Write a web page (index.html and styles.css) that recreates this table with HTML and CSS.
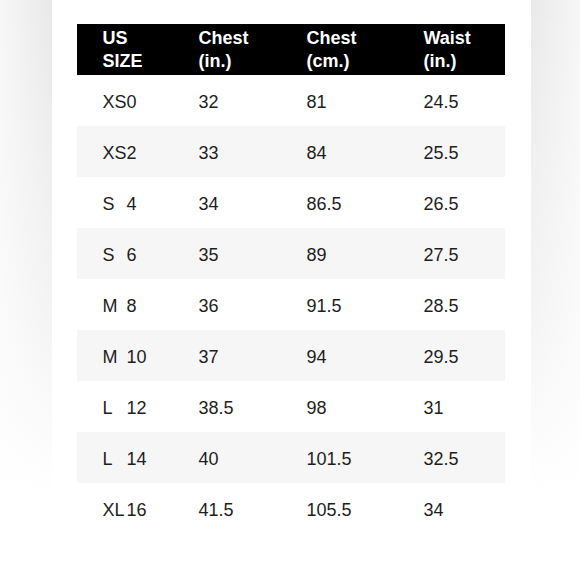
FILE: index.html
```html
<!DOCTYPE html>
<html>
<head>
<meta charset="utf-8">
<link rel="stylesheet" href="styles.css">
</head>
<body>
<div class="panel">
  <div class="table">
    <div class="row head">
      <div class="cell">US<br>SIZE</div>
      <div class="cell">Chest<br>(in.)</div>
      <div class="cell">Chest<br>(cm.)</div>
      <div class="cell">Waist<br>(in.)</div>
    </div>
    <div class="row"><div class="cell"><span class="ltr">XS</span>0</div><div class="cell">32</div><div class="cell">81</div><div class="cell">24.5</div></div>
    <div class="row alt"><div class="cell"><span class="ltr">XS</span>2</div><div class="cell">33</div><div class="cell">84</div><div class="cell">25.5</div></div>
    <div class="row"><div class="cell"><span class="ltr">S</span>4</div><div class="cell">34</div><div class="cell">86.5</div><div class="cell">26.5</div></div>
    <div class="row alt"><div class="cell"><span class="ltr">S</span>6</div><div class="cell">35</div><div class="cell">89</div><div class="cell">27.5</div></div>
    <div class="row"><div class="cell"><span class="ltr">M</span>8</div><div class="cell">36</div><div class="cell">91.5</div><div class="cell">28.5</div></div>
    <div class="row alt"><div class="cell"><span class="ltr">M</span>10</div><div class="cell">37</div><div class="cell">94</div><div class="cell">29.5</div></div>
    <div class="row"><div class="cell"><span class="ltr">L</span>12</div><div class="cell">38.5</div><div class="cell">98</div><div class="cell">31</div></div>
    <div class="row alt"><div class="cell"><span class="ltr">L</span>14</div><div class="cell">40</div><div class="cell">101.5</div><div class="cell">32.5</div></div>
    <div class="row"><div class="cell"><span class="ltr">XL</span>16</div><div class="cell">41.5</div><div class="cell">105.5</div><div class="cell">34</div></div>
  </div>
</div>
</body>
</html>
```
FILE: styles.css
```css
html, body {
  margin: 0;
  padding: 0;
  height: 100%;
}
body {
  background:
    linear-gradient(to bottom, rgba(255,255,255,0) 0%, rgba(255,255,255,0.5) 55%, #fff 85%),
    linear-gradient(to right, #f7f7f7 0px, #e9e9e9 51px, #e9e9e9 529px, #f6f6f6 580px);
  display: flex;
  justify-content: center;
  font-family: "Liberation Sans", Arial, sans-serif;
  color: #1e1e1e;
  overflow: hidden;
}
.panel {
  width: 479px;
  margin-left: 2px;
  background: #fff;
  padding: 24px 26px 0 25px;
  box-sizing: border-box;
  min-height: 580px;
}
.table {
  width: 428px;
}
.row {
  display: grid;
  grid-template-columns: 96px 108px 117px 107px;
  height: 51px;
  align-items: center;
  font-size: 18px;
}
.row .cell {
  padding-top: 4px;
}
.row.alt {
  background: #f6f6f6;
}
.row.head {
  background: #000;
  color: #fff;
  font-weight: bold;
  line-height: 23.5px;
  height: 51px;
}
.row.head .cell {
  padding-top: 1px;
}
.cell {
  padding-left: 26px;
  white-space: nowrap;
}
.ltr {
  display: inline-block;
  width: 24px;
}
```
